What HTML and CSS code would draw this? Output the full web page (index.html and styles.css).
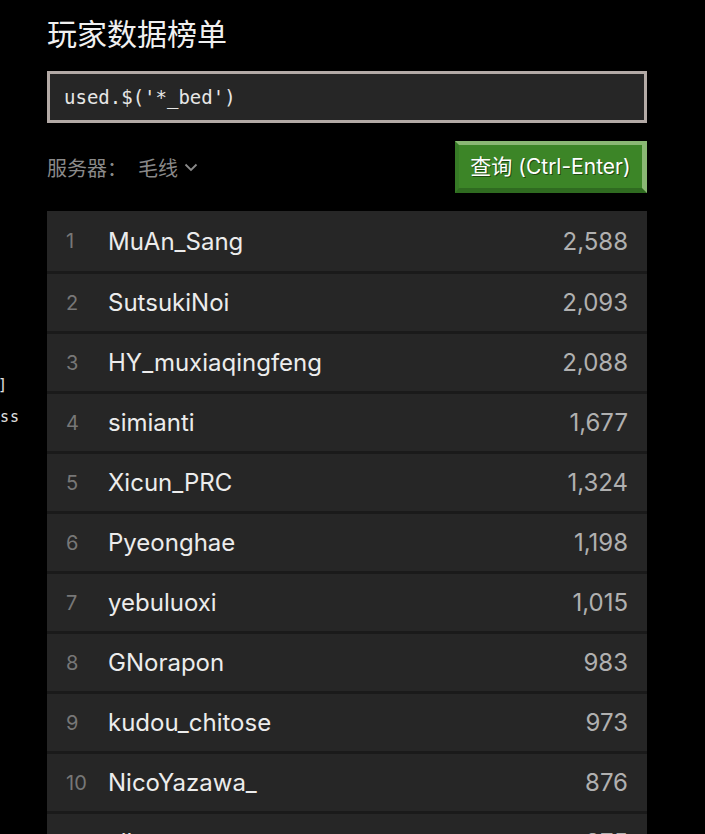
FILE: index.html
```html
<!DOCTYPE html>
<html lang="zh-CN">
<head>
    <meta charset="UTF-8">
    <meta name="viewport" content="width=device-width, initial-scale=1.0">
    <title>玩家数据榜单</title>
    <link rel="stylesheet" href="styles.css">
</head>
<body>
    <div class="page">
        <aside class="edge">
            <div class="edge-bracket">]</div>
            <div class="edge-tail">ss</div>
        </aside>

        <main class="board">
            <h1>玩家数据榜单</h1>

            <div class="query">used.$('*_bed')</div>

            <div class="toolbar">
                <div class="server">
                    <span class="server-label">服务器：</span>
                    <span class="server-pick">毛线
                        <svg class="chevron" width="14" height="9" viewBox="0 0 14 9">
                            <path d="M1.5 1.5 L7 7 L12.5 1.5" fill="none" stroke="#8a8a8a" stroke-width="1.8"/>
                        </svg>
                    </span>
                </div>
                <button class="run">查询 (Ctrl-Enter)</button>
            </div>

            <ol class="ranking">
                <li class="row"><span class="rank">1</span><span class="name">MuAn_Sang</span><span class="score">2,588</span></li>
                <li class="row"><span class="rank">2</span><span class="name">SutsukiNoi</span><span class="score">2,093</span></li>
                <li class="row"><span class="rank">3</span><span class="name">HY_muxiaqingfeng</span><span class="score">2,088</span></li>
                <li class="row"><span class="rank">4</span><span class="name">simianti</span><span class="score">1,677</span></li>
                <li class="row"><span class="rank">5</span><span class="name">Xicun_PRC</span><span class="score">1,324</span></li>
                <li class="row"><span class="rank">6</span><span class="name">Pyeonghae</span><span class="score">1,198</span></li>
                <li class="row"><span class="rank">7</span><span class="name">yebuluoxi</span><span class="score">1,015</span></li>
                <li class="row"><span class="rank">8</span><span class="name">GNorapon</span><span class="score">983</span></li>
                <li class="row"><span class="rank">9</span><span class="name">kudou_chitose</span><span class="score">973</span></li>
                <li class="row"><span class="rank">10</span><span class="name">NicoYazawa_</span><span class="score">876</span></li>
                <li class="row"><span class="rank">11</span><span class="name">sihuan</span><span class="score">875</span></li>
            </ol>
        </main>
    </div>
</body>
</html>
```

FILE: styles.css
```css
body {
    margin: 0;
    background: #000;
    color: #e8e8e8;
    font-family: Inter, "Noto Sans CJK SC", sans-serif;
    overflow: hidden;
}

.page {
    display: flex;
}

/* bits of the neighbouring panel, cut off by the window edge */
.edge {
    width: 47px;
    flex: none;
    padding-top: 373px;
    font-family: "DejaVu Sans Mono", monospace;
    font-size: 15px;
    color: #e0e0e0;
    overflow: hidden;
}

.edge-bracket {
    line-height: 24px;
    margin-left: -2px;
}

.edge-tail {
    line-height: 24px;
    margin-top: 8px;
    letter-spacing: 1px;
}

.board {
    width: 600px;
    flex: none;
}

h1 {
    margin: 12px 0 0;
    font-family: "Noto Sans CJK SC", sans-serif;
    font-size: 30px;
    font-weight: 400;
    line-height: 40px;
    color: #f0f0f0;
}

.query {
    box-sizing: border-box;
    height: 52px;
    margin-top: 19px;
    padding: 0 14px;
    border: 3px solid #b3aaa6;
    background: #262626;
    font-family: "DejaVu Sans Mono", monospace;
    font-size: 19px;
    line-height: 46px;
    color: #e6e6e6;
}

.toolbar {
    display: flex;
    justify-content: space-between;
    align-items: center;
    height: 52px;
    margin-top: 18px;
}

.server {
    display: flex;
    align-items: center;
    font-family: "Noto Sans CJK SC", sans-serif;
    font-size: 20px;
    color: #8a8a8a;
}

.server-pick {
    display: flex;
    align-items: center;
    margin-left: 11px;
}

.chevron {
    margin-left: 6px;
}

.run {
    box-sizing: border-box;
    width: 192px;
    height: 52px;
    padding: 0 0 4px;
    border-style: solid;
    border-width: 4px 5px 5px 4px;
    border-color: #8ab874 #8ab874 #2f6b20 #367a26;
    background: #3c8527;
    color: #fff;
    font-family: Inter, "Noto Sans CJK SC", sans-serif;
    font-size: 21px;
    text-shadow: 1px 1px 0 #1e4a13;
    cursor: pointer;
}

.ranking {
    list-style: none;
    margin: 18px 0 0;
    padding: 0;
    display: flex;
    flex-direction: column;
    gap: 3px;
    background: #1a1a1a;
}

.row {
    display: flex;
    align-items: center;
    height: 57px;
    padding: 0 19px;
    background: #262626;
}

.row:first-child {
    height: 60px;
}

.rank {
    width: 42px;
    flex: none;
    font-size: 20px;
    color: #777;
}

.name {
    flex: 1;
    font-size: 24px;
    color: #ececec;
}

.score {
    font-size: 24px;
    color: #b0b0b0;
}
```
